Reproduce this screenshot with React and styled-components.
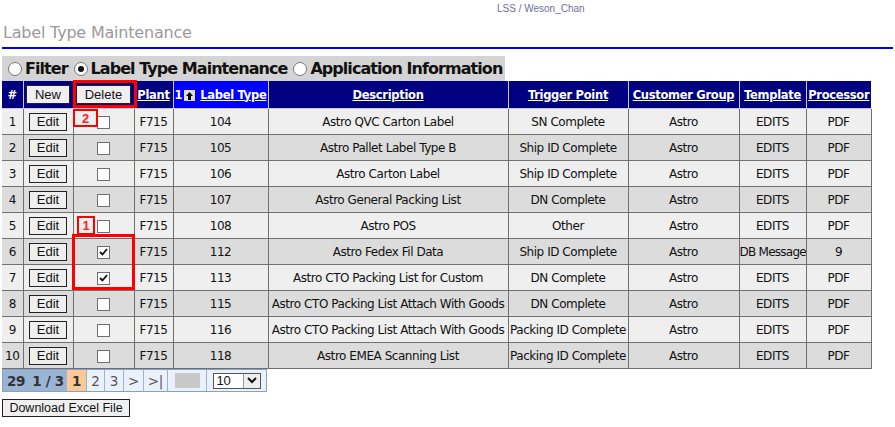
import React from 'react'
import { styled, createGlobalStyle } from 'styled-components'

const Global = createGlobalStyle`
  html, body { margin: 0; padding: 0; background: #ffffff; }
  body { font-family: "DejaVu Sans", Verdana, sans-serif; }
`

const Page = styled.div`
  padding: 0 2px;
  width: 891px;
`

const UserLine = styled.div`
  height: 17px;
  padding-left: 495px;
  font-family: "Liberation Sans", Arial, sans-serif;
  font-size: 10px;
  line-height: 17px;
  color: #6e6e9e;
`

const Title = styled.h1`
  margin: 0;
  padding: 2px 0 0 1px;
  height: 28px;
  font-size: 16px;
  font-weight: 400;
  line-height: 28px;
  color: #9a9a9a;
  letter-spacing: -0.2px;
`

const Rule = styled.div`
  height: 2px;
  background: #0000ee;
  margin-bottom: 7px;
`

const TabBar = styled.div`
  display: inline-flex;
  align-items: center;
  gap: 6px;
  height: 25px;
  padding: 0 3px 0 6px;
  background: #d4d4d4;
`

const TabOption = styled.label`
  display: flex;
  align-items: center;
  gap: 3px;
  font-size: 16px;
  font-weight: 700;
  color: #111;
  letter-spacing: -0.95px;
`

const Radio = styled.span`
  display: inline-flex;
  align-items: center;
  justify-content: center;
  width: 12px;
  height: 12px;
  border: 1px solid #767676;
  border-radius: 50%;
  background: #fff;
  &::after {
    content: "";
    width: 6px;
    height: 6px;
    border-radius: 50%;
    background: ${p => (p.$on ? '#111' : 'transparent')};
  }
`

const TableWrap = styled.div`
  position: relative;
  width: 869px;
`

const Grid = styled.table`
  border-collapse: collapse;
  table-layout: fixed;
  width: 869px;
  font-size: 12px;
`

const Head = styled.th`
  height: 27px;
  padding: 0;
  background: ${p => (p.$sorted ? '#0000ff' : '#000080')};
  color: #fff;
  font-size: 11.5px;
  font-weight: 700;
  border: 1px solid #c8c8d8;
  border-top: 0;
  white-space: nowrap;
  letter-spacing: -0.3px;
  &:first-child { border-left: 0; }
  &:last-child { border-right: 0; }
`

const HeadLink = styled.span`
  text-decoration: underline;
`

const SortIcon = styled.span`
  display: inline-flex;
  align-items: center;
  justify-content: center;
  width: 11px;
  height: 11px;
  margin: 0 5px 0 2px;
  background: #dedede;
  vertical-align: -1px;
`

const Row = styled.tr`
  background: ${p => (p.$alt ? '#dcdcdc' : '#efefef')};
`

const Cell = styled.td`
  height: 25px;
  padding: 0;
  border: 1px solid #707070;
  text-align: center;
  color: #111;
  white-space: nowrap;
  overflow: hidden;
  letter-spacing: ${p => (p.$tight ? '-0.75px' : '-0.45px')};
  &:first-child { border-left: 0; }
`

const Button = styled.button`
  font-family: "Liberation Sans", Arial, sans-serif;
  font-size: ${p => p.$fs || 13}px;
  color: #111;
  background: #efefef;
  border: 1px solid #222;
  padding: 0;
  height: ${p => p.$h || 18}px;
  width: ${p => p.$w || 'auto'};
  line-height: 16px;
  letter-spacing: 0;
`

const Box = styled.span`
  display: inline-flex;
  align-items: center;
  justify-content: center;
  width: 11px;
  height: 11px;
  border: 1px solid #6f6f6f;
  background: #fff;
  vertical-align: middle;
`

const Mark = styled.div`
  position: absolute;
  left: ${p => p.$x}px;
  top: ${p => p.$y}px;
  width: ${p => p.$w}px;
  height: ${p => p.$h}px;
  box-sizing: border-box;
  border: ${p => p.$b}px solid #ff0000;
  color: #ff2020;
  font-family: "Liberation Sans", Arial, sans-serif;
  font-weight: 700;
  font-size: 13px;
  display: flex;
  align-items: center;
  justify-content: center;
  pointer-events: none;
`

const Pager = styled.div`
  display: inline-flex;
  border: 1px solid #8aa0c0;
  font-size: 13.5px;
`

const PageCell = styled.span`
  display: flex;
  align-items: center;
  justify-content: center;
  height: 21px;
  width: ${p => p.$w}px;
  border-right: 1px solid #9fb3cf;
  background: ${p => p.$bg || '#eaf1fa'};
  color: ${p => (p.$bold ? '#333' : '#555')};
  font-weight: ${p => (p.$bold ? 700 : 400)};
  letter-spacing: -0.3px;
  &:last-child { border-right: 0; }
`

const Blank = styled.span`
  width: 25px;
  height: 15px;
  background: #c8c8c8;
`

const PageSize = styled.span`
  display: flex;
  align-items: center;
  justify-content: space-between;
  box-sizing: border-box;
  width: 48px;
  height: 16px;
  border: 1px solid #555;
  background: #fff;
  padding-left: 3px;
  font-family: "Liberation Sans", Arial, sans-serif;
  font-size: 13px;
  color: #111;
`

const Arrow = styled.span`
  display: flex;
  align-items: center;
  justify-content: center;
  width: 16px;
  height: 14px;
  border-left: 1px solid #999;
  background: #eee;
`

const Footer = styled.div`
  margin-top: 5px;
`

const columns = [
  { key: 'num', w: 21 },
  { key: 'edit', w: 50 },
  { key: 'del', w: 61 },
  { key: 'plant', w: 39 },
  { key: 'type', w: 95 },
  { key: 'desc', w: 240 },
  { key: 'trig', w: 120 },
  { key: 'cust', w: 111 },
  { key: 'tpl', w: 67 },
  { key: 'proc', w: 65 },
]

const rows = [
  [104, 'Astro QVC Carton Label', 'SN Complete', 'EDITS', 'PDF'],
  [105, 'Astro Pallet Label Type B', 'Ship ID Complete', 'EDITS', 'PDF'],
  [106, 'Astro Carton Label', 'Ship ID Complete', 'EDITS', 'PDF'],
  [107, 'Astro General Packing List', 'DN Complete', 'EDITS', 'PDF'],
  [108, 'Astro POS', 'Other', 'EDITS', 'PDF'],
  [112, 'Astro Fedex Fil Data', 'Ship ID Complete', 'DB Message', '9'],
  [113, 'Astro CTO Packing List for Custom', 'DN Complete', 'EDITS', 'PDF'],
  [115, 'Astro CTO Packing List Attach With Goods', 'DN Complete', 'EDITS', 'PDF'],
  [116, 'Astro CTO Packing List Attach With Goods', 'Packing ID Complete', 'EDITS', 'PDF'],
  [118, 'Astro EMEA Scanning List', 'Packing ID Complete', 'EDITS', 'PDF'],
]

const checked = [6, 7]

const Check = ({ on }) => (
  <Box>
    {on && (
      <svg width="9" height="8" viewBox="0 0 9 8">
        <path d="M1 4 L3.5 6.5 L8 1" fill="none" stroke="#111" strokeWidth="1.8" />
      </svg>
    )}
  </Box>
)

const App = () => (
  <Page>
    <Global />
    <UserLine>LSS / Weson_Chan</UserLine>
    <Title>Label Type Maintenance</Title>
    <Rule />
    <TabBar>
      <TabOption><Radio />Filter</TabOption>
      <TabOption><Radio $on />Label Type Maintenance</TabOption>
      <TabOption><Radio />Application Information</TabOption>
    </TabBar>
    <TableWrap>
      <Grid>
        <colgroup>
          {columns.map(c => <col key={c.key} style={{ width: c.w }} />)}
        </colgroup>
        <thead>
          <tr>
            <Head>#</Head>
            <Head><Button $w="44px" $h={19}>New</Button></Head>
            <Head><Button $w="55px" $h={19}>Delete</Button></Head>
            <Head><HeadLink>Plant</HeadLink></Head>
            <Head $sorted>
              1<SortIcon>
                <svg width="7" height="8" viewBox="0 0 7 8">
                  <path d="M3.5 0 L7 4 L5 4 L5 8 L2 8 L2 4 L0 4 Z" fill="#000" />
                </svg>
              </SortIcon>
              <HeadLink>Label Type</HeadLink>
            </Head>
            <Head><HeadLink>Description</HeadLink></Head>
            <Head><HeadLink>Trigger Point</HeadLink></Head>
            <Head><HeadLink>Customer Group</HeadLink></Head>
            <Head><HeadLink>Template</HeadLink></Head>
            <Head><HeadLink>Processor</HeadLink></Head>
          </tr>
        </thead>
        <tbody>
          {rows.map((r, i) => (
            <Row key={r[0]} $alt={i % 2 === 1}>
              <Cell>{i + 1}</Cell>
              <Cell><Button $w="38px">Edit</Button></Cell>
              <Cell><Check on={checked.includes(i + 1)} /></Cell>
              <Cell>F715</Cell>
              <Cell>{r[0]}</Cell>
              <Cell>{r[1]}</Cell>
              <Cell>{r[2]}</Cell>
              <Cell>Astro</Cell>
              <Cell $tight={r[3].length > 6}>{r[3]}</Cell>
              <Cell>{r[4]}</Cell>
            </Row>
          ))}
        </tbody>
      </Grid>
      <Mark $x={71} $y={-1} $w={64} $h={28} $b={3} />
      <Mark $x={71} $y={28} $w={25} $h={18} $b={2}>2</Mark>
      <Mark $x={75} $y={135} $w={18} $h={19} $b={2}>1</Mark>
      <Mark $x={70} $y={153} $w={63} $h={56} $b={3} />
    </TableWrap>
    <Pager>
      <PageCell $w={26} $bg="#9ab4d5" $bold>29</PageCell>
      <PageCell $w={36} $bg="#9ab4d5" $bold>1 / 3</PageCell>
      <PageCell $w={19} $bg="#fdc893" $bold>1</PageCell>
      <PageCell $w={17}>2</PageCell>
      <PageCell $w={18}>3</PageCell>
      <PageCell $w={19}>&gt;</PageCell>
      <PageCell $w={23}>&gt;|</PageCell>
      <PageCell $w={38}><Blank /></PageCell>
      <PageCell $w={59}>
        <PageSize>
          10
          <Arrow>
            <svg width="10" height="7" viewBox="0 0 10 7">
              <path d="M1 1 L5 5 L9 1" fill="none" stroke="#111" strokeWidth="2" />
            </svg>
          </Arrow>
        </PageSize>
      </PageCell>
    </Pager>
    <Footer>
      <Button $w="128px" $fs={12.5}>Download Excel File</Button>
    </Footer>
  </Page>
)

export default App
